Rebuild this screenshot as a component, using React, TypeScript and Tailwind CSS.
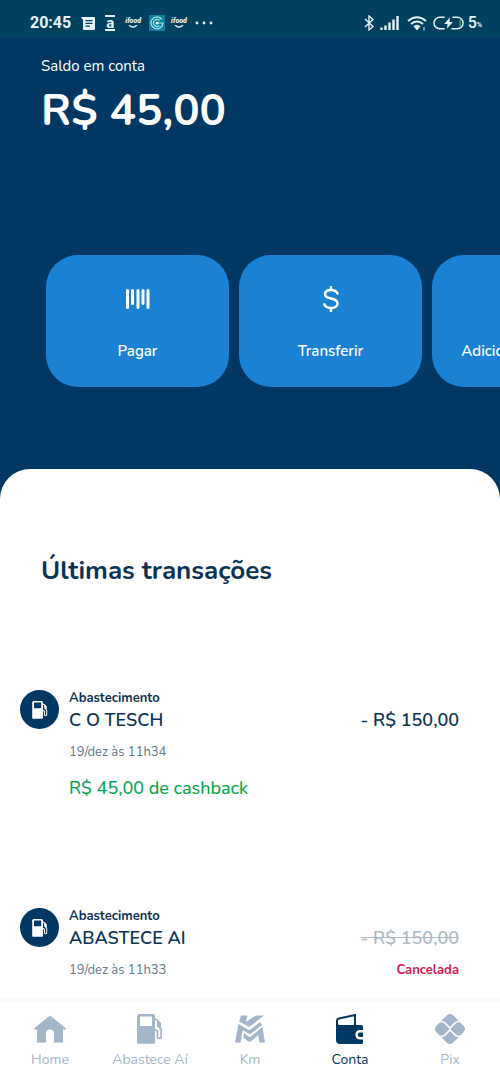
import type { ReactNode } from "react";
import { clsx } from "clsx";

type Transaction = {
  id: number;
  type: string;
  place: string;
  date: string;
  value: string;
  cashback?: string;
  canceled?: boolean;
};

const transactions: Transaction[] = [
  {
    id: 1,
    type: "Abastecimento",
    place: "C O TESCH",
    date: "19/dez às 11h34",
    value: "- R$ 150,00",
    cashback: "R$ 45,00 de cashback",
  },
  {
    id: 2,
    type: "Abastecimento",
    place: "ABASTECE AI",
    date: "19/dez às 11h33",
    value: "- R$ 150,00",
    canceled: true,
  },
];

const PumpIcon = ({ className }: { className: string }) => (
  <svg viewBox="0 0 26 30" className={className} aria-hidden="true">
    <path
      fill="currentColor"
      fillRule="evenodd"
      d="M2.5 0h13A2.5 2.5 0 0 1 18 2.5V28.5a1.2 1.2 0 0 1-1.2 1.2H1.2A1.2 1.2 0 0 1 0 28.5V2.5A2.5 2.5 0 0 1 2.5 0ZM3 2.500V12h12V2.500Z"
    />
    <path
      d="M17.500 5.500h2L23.200 9v5l1 2v6.500a1.900 1.900 0 0 1-3.800 0V17l-3-1.500"
      fill="none"
      stroke="currentColor"
      strokeWidth="1.700"
      strokeLinejoin="round"
    />
    <path fill="currentColor" d="m20 6 3.500 3v6L20 12.500Z" />
  </svg>
);

const HomeIcon = () => (
  <svg viewBox="0 0 32 27" className="h-7 w-8" aria-hidden="true">
    <path
      fill="currentColor"
      d="M16 0 32 13l-1.500 1.500-1.500-.9V27h-9v-9a4 4 0 0 0-8 0v9H3V13.600l-1.500.9L0 13Z"
    />
  </svg>
);

const KmIcon = () => (
  <svg viewBox="0 0 30 27" className="h-7 w-[30px]" aria-hidden="true">
    <g fill="currentColor">
      <path d="M6 0h6.500L10.800 6.500 18.500 1.500Q20.500 0 23 0h6L15.500 10.500q-1.500 1-3 0L4.200 6Z" />
      <path d="m3.500 8.500 9 5.500q1.500 1 3 0L25 6.500 27 9.500 16 18q-1.200 1-2.500 0L7.800 14.500 5.500 27H0Z" />
      <path d="m9 17.500 4.500 3.500q1.500 1 2.500 0L27.500 11.500 30 27h-5.500l-1.200-7.500-6.800 6q-1.800 1.500-3.500.2L8.200 22Z" />
    </g>
  </svg>
);

const WalletIcon = () => (
  <svg viewBox="0 0 28 30" className="h-[30px] w-7" aria-hidden="true">
    <path
      d="M1 11V6.500Q1 5 3 4.500L19 1v10"
      fill="none"
      stroke="currentColor"
      strokeWidth="2"
    />
    <path
      fill="currentColor"
      d="M0 8.500 3 11h22.500A1.500 1.500 0 0 1 27 12.500V16h-3.500a4.800 4.800 0 0 0 0 9.500H27v3a1.500 1.500 0 0 1-1.500 1.500H4a4 4 0 0 1-4-4Z"
    />
    <path fill="currentColor" d="M24 18.500h3v4.500h-3a2.200 2.200 0 0 1 0-4.500Z" />
  </svg>
);

const PixIcon = () => (
  <svg viewBox="0 0 30 30" className="size-[30px]" aria-hidden="true">
    <g fill="currentColor">
      <path d="M6.300 6.800 12 1.200q3-2.400 6 0l5.700 5.600q-2.700 0-4.300 1.800L15 13l-4.400-4.400Q9 6.800 6.300 6.800Z" />
      <path d="M6.300 23.200 12 28.800q3 2.400 6 0l5.700-5.600q-2.700 0-4.300-1.800L15 17l-4.400 4.400Q9 23.200 6.300 23.200Z" />
      <path d="M4.800 8.400Q8 8 9.500 9.800L13.800 14q1 1 0 2L9.500 20.200Q8 22 4.800 21.600L1.200 18q-2.400-3 0-6Z" />
      <path d="M25.200 8.400Q22 8 20.500 9.800L16.200 14q-1 1 0 2l4.300 4.200q1.500 1.800 4.700 1.400l3.600-3.600q2.400-3 0-6Z" />
    </g>
  </svg>
);

const BarcodeIcon = () => (
  <svg viewBox="0 0 24 20" className="h-5 w-6" aria-hidden="true">
    <path
      d="M1.500 1.500v17M6.500 1.500v13M12 1.500v17M17 1.500v13M22 1.500v17"
      fill="none"
      stroke="currentColor"
      strokeWidth="3"
      strokeLinecap="round"
    />
  </svg>
);

const DollarIcon = () => (
  <svg viewBox="0 0 16 26" className="h-[26px] w-4" aria-hidden="true">
    <path
      d="M14.500 7.500C13.500 5 11 4 8 4 4.500 4 2 5.600 2 8.300 2 14.500 14.500 10.500 14.500 17.400c0 3-2.900 4.600-6.300 4.600-3.200 0-5.900-1.200-6.900-3.700M8 1v3M8 22v3"
      fill="none"
      stroke="currentColor"
      strokeWidth="2.500"
      strokeLinecap="round"
    />
  </svg>
);

const IfoodBadge = () => (
  <span className="flex flex-col items-center">
    <span className="text-[7px] leading-[7px] font-black italic">ifood</span>
    <svg viewBox="0 0 10 4" className="h-1 w-2.5" aria-hidden="true">
      <path d="M1 0q4 4 8 0" fill="none" stroke="currentColor" strokeWidth="1.300" />
    </svg>
  </span>
);

const StatusBar = () => (
  <div className="flex h-[38px] items-center justify-between bg-[#00415f] pt-2 pr-[18px] pl-[30px] font-['Roboto',sans-serif] text-[#e6f4f8]">
    <div className="flex items-center">
      <span className="text-base font-bold">20:45</span>
      <svg viewBox="0 0 14 13" className="ml-2.5 h-[13px] w-3.5" aria-hidden="true">
        <path
          fill="currentColor"
          fillRule="evenodd"
          d="M0 0h13a1 1 0 0 1 1 1v11a1 1 0 0 1-1 1H3a1 1 0 0 1-1-1V3ZM4.500 3v1.300h7V3ZM4.500 5.700V7h7V5.700ZM4.500 8.400v1.300h4.500V8.400Z"
        />
      </svg>
      <span className="ml-2.5 flex h-4 items-center border-y-2 border-current px-px text-[15px] leading-none font-bold">
        a
      </span>
      <span className="ml-2.5">
        <IfoodBadge />
      </span>
      <svg viewBox="0 0 16 16" className="ml-2 size-4" aria-hidden="true">
        <rect width="16" height="16" fill="#087f9b" />
        <path
          d="M13 4.500A6 6 0 1 0 14 8H8M10.500 5.500a3.500 3.500 0 1 0 0 5"
          fill="none"
          stroke="#a5e8ef"
          strokeWidth="1.200"
        />
        <circle cx="8" cy="8" r="1.500" fill="white" />
      </svg>
      <span className="ml-1.5">
        <IfoodBadge />
      </span>
      <svg viewBox="0 0 18 4" className="ml-2 h-1 w-[18px]" aria-hidden="true">
        <g fill="currentColor">
          <circle cx="2" cy="2" r="1.400" />
          <circle cx="9" cy="2" r="1.400" />
          <circle cx="16" cy="2" r="1.400" />
        </g>
      </svg>
    </div>
    <div className="flex items-center">
      <svg viewBox="0 0 10 16" className="h-4 w-2.5" aria-hidden="true">
        <path
          d="m1 4 8 7.500L5 15V1l4 3.500L1 12"
          fill="none"
          stroke="currentColor"
          strokeWidth="1.400"
        />
      </svg>
      <svg viewBox="0 0 19 14" className="ml-1.5 h-3.5 w-[19px]" aria-hidden="true">
        <path
          d="M1.500 14v-2.500M5.500 14v-4.500M9.500 14V6.500M13.500 14V3.500M17.500 14V0"
          stroke="currentColor"
          strokeWidth="2.400"
        />
      </svg>
      <svg viewBox="0 0 20 15" className="ml-2 h-[15px] w-5" aria-hidden="true">
        <path
          d="M1 5q9-7.500 18 0M4 8q6-5 12 0M7 11q3-2.500 6 0"
          fill="none"
          stroke="currentColor"
          strokeWidth="1.900"
        />
        <path fill="currentColor" d="m7.500 11.500 2.500 3 2.500-3q-2.500-1.500-5 0Z" />
        <path d="M17 11v3.500" stroke="currentColor" />
      </svg>
      <svg viewBox="0 0 32 14" className="ml-1.5 h-3.5 w-[31px]" aria-hidden="true">
        <path
          d="M12 1H7a6 6 0 0 0 0 12h5M20 1h5a6 6 0 0 1 0 12h-6"
          fill="none"
          stroke="currentColor"
          strokeWidth="1.500"
        />
        <path fill="currentColor" d="m17.500 1-6 7H15l-.5 5 6-7H17Z" />
        <path d="M28 4v6" stroke="#27a867" strokeWidth="1.500" />
      </svg>
      <span className="ml-1 text-base font-medium">5</span>
      <span className="pt-1 text-[7px] font-bold">%</span>
    </div>
  </div>
);

const ActionCard = ({ label, icon }: { label: string; icon: ReactNode }) => (
  <button
    type="button"
    className="flex h-[132px] w-[183px] shrink-0 flex-col items-center rounded-[32px] bg-[#1a81d3] pt-7 text-[15px] leading-6 font-semibold text-white"
  >
    <span className="flex h-8 items-center">{icon}</span>
    <span className="mt-6 whitespace-nowrap">{label}</span>
  </button>
);

const TransactionItem = ({ item }: { item: Transaction }) => (
  <li className="flex items-start gap-2.5">
    <span className="flex size-[39px] shrink-0 items-center justify-center rounded-full bg-[#003763] text-white">
      <PumpIcon className="h-[18px] w-4" />
    </span>
    <div className="min-w-0 flex-1 text-[#0b3355]">
      <p className="text-[13px] leading-4 font-bold">{item.type}</p>
      <div className="mt-0.5 flex justify-between text-lg leading-6 font-semibold">
        <h3>{item.place}</h3>
        {item.canceled ? (
          <s className="text-[#aebbc6]">{item.value}</s>
        ) : (
          <p>{item.value}</p>
        )}
      </div>
      <div className="mt-2 flex justify-between text-[13px] leading-6">
        <time className="text-[#5f788b]">{item.date}</time>
        {item.canceled && <p className="font-bold text-[#d51a55]">Cancelada</p>}
      </div>
      {item.cashback && (
        <p className="mt-3 text-lg leading-6 font-medium text-[#0aa650]">{item.cashback}</p>
      )}
    </div>
  </li>
);

const navItems = [
  { label: "Home", icon: <HomeIcon /> },
  { label: "Abastece Aí", icon: <PumpIcon className="h-[30px] w-[26px]" /> },
  { label: "Km", icon: <KmIcon /> },
  { label: "Conta", icon: <WalletIcon />, active: true },
  { label: "Pix", icon: <PixIcon /> },
];

const BottomNav = () => (
  <nav className="sticky bottom-0 grid h-[84px] grid-cols-5 border-t-4 border-[#f8f9fa] bg-white pt-3">
    {navItems.map((item) => (
      <a
        key={item.label}
        href="#"
        aria-current={item.active ? "page" : undefined}
        className={clsx(
          "flex flex-col items-center gap-1 text-sm leading-6 whitespace-nowrap",
          item.active ? "text-[#003763]" : "text-[#a3b5c9]"
        )}
      >
        <span className="flex h-[30px] items-center">{item.icon}</span>
        {item.label}
      </a>
    ))}
  </nav>
);

export default function App() {
  return (
    <div className="flex min-h-screen flex-col bg-[#003763] font-['Nunito','Lato',sans-serif]">
      <StatusBar />
      <header className="px-[41px] pt-4 text-white">
        <p className="text-[15px] leading-6">Saldo em conta</p>
        <h1 className="mt-1 text-[44px] leading-[58px] font-bold">R$ 45,00</h1>
      </header>
      <div className="mt-[115px] flex gap-2.5 overflow-hidden pl-[46px]">
        <ActionCard label="Pagar" icon={<BarcodeIcon />} />
        <ActionCard label="Transferir" icon={<DollarIcon />} />
        <ActionCard label="Adicionar dinheiro" icon={null} />
      </div>
      <main className="mt-[82px] flex-1 rounded-t-[30px] bg-white pt-[84px]">
        <h2 className="px-[41px] text-[26px] leading-9 font-bold text-[#0b3355]">
          Últimas transações
        </h2>
        <ul className="mt-[101px] flex flex-col gap-[108px] pr-[41px] pb-4 pl-5">
          {transactions.map((item) => (
            <TransactionItem key={item.id} item={item} />
          ))}
        </ul>
      </main>
      <BottomNav />
    </div>
  );
}
